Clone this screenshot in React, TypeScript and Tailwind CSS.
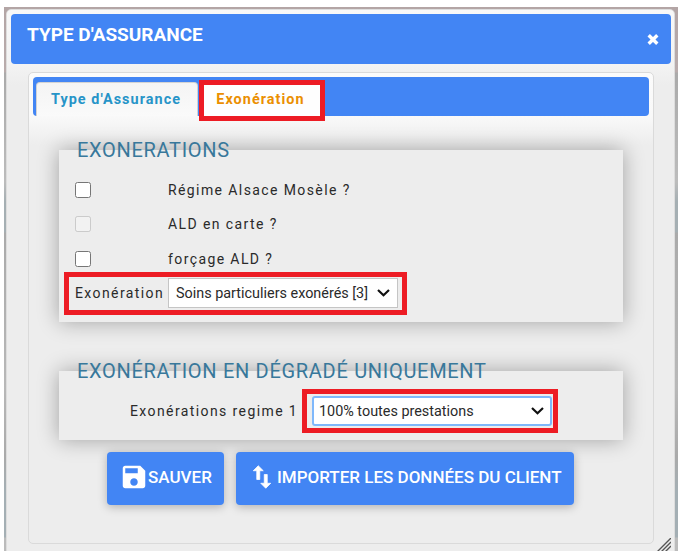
import { useState } from 'react';
import type { ReactNode } from 'react';

interface section {
  title: string;
  className: string;
  children: ReactNode;
}

const exemptions = [
  { id: 'alsace', label: 'Régime Alsace Mosèle ?', disabled: false },
  { id: 'ald', label: 'ALD en carte ?', disabled: true },
  { id: 'forcage', label: 'forçage ALD ?', disabled: false },
];

function Chevron() {
  return (
    <svg
      className="pointer-events-none absolute top-1/2 right-[8px] h-[8px] w-[13px] -translate-y-1/2"
      viewBox="0 0 13 8"
      fill="none"
      stroke="#101010"
      strokeWidth="2.2"
    >
      <path d="M1 1L6.5 6.2L12 1" />
    </svg>
  );
}

function Section({ title, className, children }: section) {
  return (
    <section
      className={`w-[564px] bg-[#ededed] shadow-[0_0_20px_rgba(0,0,0,0.32)] ${className}`}
    >
      <h2 className="relative -top-[12px] ml-[18px] h-[24px] text-[20px] leading-[24px] tracking-[0.7px] whitespace-nowrap text-[#38789b]">
        {title}
      </h2>
      {children}
    </section>
  );
}

function App() {
  const [checked, setChecked] = useState<string[]>([]);
  const toggle = (id: string) => {
    setChecked(
      checked.includes(id) ? checked.filter((c) => c !== id) : [...checked, id]
    );
  };

  return (
    <div className="h-[551px] w-[681px] overflow-hidden bg-white pt-[7px] pr-[3px] pl-[4px] font-[Roboto,sans-serif] text-[#2a2a2a]">
      <div className="h-[544px] bg-[linear-gradient(180deg,#b3a5a5_0,#b9acac_65px,#aaaaaa_66px,#bcbcbc_175px,#a5afb3_195px,#a5afb3_225px,#aaa_226px,#b8b8b8_380px,#aaa_450px,#a4afb4_485px,#a4afb4_530px,#bbb_531px)] pt-[2px] pr-[3px] pl-[2px]">
        <div className="relative h-[560px] rounded-t-[5px] border border-[#ddd] bg-[linear-gradient(180deg,#f8f8f8_0,#f3f3f3_55px,#ededed_75px)] pt-[4px] pr-[3px] pl-[4px]">
          <header className="flex h-[50px] justify-between rounded-[4px] bg-[#4285f4] pt-[8px] pr-[12px] pl-[16px] text-white">
            <h1 className="text-[19px] leading-[25px] font-bold">
              TYPE D'ASSURANCE
            </h1>
            <button aria-label="Fermer" className="mt-[12px] h-[11px] w-[12px]">
              <svg viewBox="0 0 12 11" stroke="currentColor" strokeWidth="3.4">
                <path d="M1.7 1.2L10.3 9.8M10.3 1.2L1.7 9.8" />
              </svg>
            </button>
          </header>

          <main className="mt-[8px] ml-[17px] h-[472px] w-[626px] rounded-[5px] border border-[#dadada] bg-[linear-gradient(180deg,#fbfbfb_0,#f9f9f9_43px,#ededed_72px)] p-[4px]">
            <nav className="flex h-[39px] rounded-[4px] bg-[#4285f4] pl-[3px] text-[14.4px] font-bold tracking-[1.05px]">
              <button className="mt-[5px] h-[34px] w-[162px] rounded-t-[4px] border border-b-0 border-[#d3d3d3] bg-[linear-gradient(180deg,#f4f4f4,#fafafa)] pr-[2px] text-[#2694c8]">
                Type d'Assurance
              </button>
              <button className="z-10 mt-[3px] ml-[1px] h-[41px] w-[126px] border-[5px] border-[#ed1c24] bg-[#fefefe] pr-[3px] pb-[2px] text-[#eb8f00]">
                Exonération
              </button>
            </nav>

            <Section title="EXONERATIONS" className="mt-[34px] ml-[26px] h-[172px]">
              <div className="-mt-[2px] pl-[16px] text-[14px] tracking-[1.4px]">
                {exemptions.map((e) => (
                  <label key={e.id} className="flex h-[34.5px] items-center">
                    <input
                      type="checkbox"
                      className="mt-px h-[16px] w-[16px]"
                      disabled={e.disabled}
                      checked={checked.includes(e.id)}
                      onChange={() => toggle(e.id)}
                    />
                    <span className="mt-[2px] ml-[77px]">{e.label}</span>
                  </label>
                ))}
              </div>
              <div className="-mt-[4px] ml-[5px] flex h-[43px] w-[343px] items-center border-[5px] border-[#ed1c24] pl-[6px] text-[14px] tracking-[1.4px]">
                <label htmlFor="exo" className="w-[93px]">
                  Exonération
                </label>
                <div className="relative">
                  <select
                    id="exo"
                    className="block h-[30px] w-[230px] appearance-none border border-[#c5c5c5] bg-white pt-[2px] pl-[7px] text-[14.4px] tracking-[0px]"
                  >
                    <option>Soins particuliers exonérés [3]</option>
                  </select>
                  <Chevron />
                </div>
              </div>
            </Section>

            <Section
              title="EXONÉRATION EN DÉGRADÉ UNIQUEMENT"
              className="mt-[49px] ml-[26px] h-[69px]"
            >
              <div className="-mt-[6px] flex items-center text-[14px] tracking-[1.4px]">
                <label htmlFor="regime" className="ml-[71px] w-[172px] whitespace-nowrap">
                  Exonérations regime 1
                </label>
                <div className="relative flex h-[44px] w-[256px] items-center border-[5px] border-[#ed1c24] pl-[5px]">
                  <div className="relative">
                    <select
                      id="regime"
                      className="block h-[30px] w-[240px] appearance-none rounded-[3px] border-2 border-[#7fb8fb] bg-white pt-[2px] pl-[5px] text-[14.4px] tracking-[0px]"
                    >
                      <option>100% toutes prestations</option>
                    </select>
                    <Chevron />
                  </div>
                </div>
              </div>
            </Section>

            <div className="mt-[12px] ml-[74px] flex gap-[12px] text-[17px] font-medium text-white">
              <button className="flex h-[53px] w-[117px] items-center rounded-[4px] bg-[#4285f4] pl-[12px] shadow-[0_2px_10px_rgba(0,0,0,0.26)]">
                <svg className="-mt-[3px] h-[30px] w-[30px]" viewBox="0 0 24 24" fill="currentColor">
                  <path d="M17 3H5c-1.110 0-2 .9-2 2v14c0 1.100.89 2 2 2h14c1.100 0 2-.9 2-2V7l-4-4zm-5 16c-1.660 0-3-1.340-3-3s1.340-3 3-3 3 1.340 3 3-1.340 3-3 3zm3-10H5V5h10v4z" />
                </svg>
                <span className="-mt-[2px] ml-[-1px]">SAUVER</span>
              </button>
              <button className="flex h-[53px] w-[338px] items-center rounded-[4px] bg-[#4285f4] pl-[11px] shadow-[0_2px_10px_rgba(0,0,0,0.26)]">
                <svg
                  className="-mt-[3px] h-[30px] w-[30px]"
                  viewBox="0 0 24 24"
                  fill="currentColor"
                  stroke="currentColor"
                  strokeWidth="0.6"
                >
                  <path d="M16.200 17.010V10h-2.400v7.010h-2.800L15 21l4-3.990h-2.800zM9 3L5 6.990h2.800V14h2.400V6.990h2.800L9 3z" />
                </svg>
                <span className="-mt-[2px] whitespace-nowrap">
                  IMPORTER LES DONNÉES DU CLIENT
                </span>
              </button>
            </div>
          </main>

          <svg
            className="absolute top-[528px] right-[3px] h-[14px] w-[14px]"
            viewBox="0 0 14 14"
            stroke="#555"
            strokeWidth="1.400"
          >
            <path d="M0 14L14 0M4 14L14 4M8 14L14 8" />
          </svg>
        </div>
      </div>
    </div>
  );
}

export default App;
